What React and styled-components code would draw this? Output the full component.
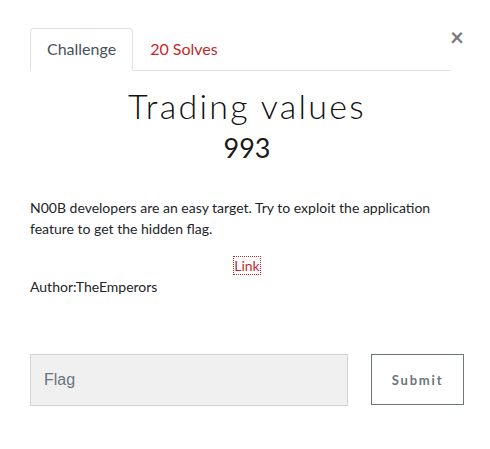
import React from 'react';
import styled, { createGlobalStyle } from 'styled-components';

const Global = createGlobalStyle`
	body {
		margin: 0;
		background: #fff;
		font-family: Lato, "Open Sans", sans-serif;
		color: #212529;
	}
`

export default function App() {
	return (
		<>
			<Global />
			<Modal>
				<Header>
					<Tabs>
						<Tab active>Challenge</Tab>
						<Tab>20 Solves</Tab>
					</Tabs>
					<Close>×</Close>
				</Header>
				<Title>Trading values</Title>
				<Value>993</Value>
				<Description>
					N00B developers are an easy target. Try to exploit the application feature to get the hidden flag.
				</Description>
				<LinkRow><a href="#">Link</a></LinkRow>
				<Author>Author:TheEmperors</Author>
				<SubmitRow>
					<FlagInput placeholder="Flag" />
					<SubmitButton>Submit</SubmitButton>
				</SubmitRow>
			</Modal>
		</>
	);
}

const Modal = styled.div`
	padding: 28px 26px 0 30px;
	width: 434px;
`

const Header = styled.div`
	display: flex;
	align-items: flex-start;
	justify-content: space-between;
`

const Tabs = styled.div`
	display: flex;
	width: 420px;
	border-bottom: 1px solid #dee2e6;
`

const Tab = styled.div`
	padding: 0 16px;
	height: 41px;
	line-height: 40px;
	font-size: 16px;
	margin-bottom: -1px;
	border: 1px solid ${p => p.active ? '#dee2e6' : 'transparent'};
	border-bottom-color: ${p => p.active ? '#fff' : 'transparent'};
	border-radius: 4px 4px 0 0;
	background: ${p => p.active ? '#fff' : 'transparent'};
	color: ${p => p.active ? '#495057' : '#c62828'};
`

const Close = styled.span`
	font-size: 24px;
	font-weight: 700;
	line-height: 20px;
	color: #7a7a7a;
	margin-top: -1px;
`

const Title = styled.h3`
	margin: 15px 0 0;
	text-align: center;
	font-size: 34px;
	font-weight: 300;
	letter-spacing: 2.3px;
	line-height: 40px;
	color: #111;
`

const Value = styled.h4`
	margin: 4px 0 0;
	text-align: center;
	font-size: 27px;
	font-weight: 400;
	line-height: 36px;
	color: #1a1a1a;
`

const Description = styled.p`
	margin: 31px 0 16px;
	font-size: 14px;
	line-height: 21px;
`

const LinkRow = styled.div`
	text-align: center;
	font-size: 14px;
	line-height: 21px;
	height: 21px;
	a {
		color: #c62828;
		text-decoration: none;
		outline: 1px dotted #c62828;
	}
`

const Author = styled.div`
	font-size: 14px;
	line-height: 21px;
`

const SubmitRow = styled.div`
	display: flex;
	align-items: flex-start;
	justify-content: space-between;
	margin-top: 57px;
	width: 434px;
`

const FlagInput = styled.input`
	box-sizing: border-box;
	width: 318px;
	height: 52px;
	padding: 0 13px;
	background: #f0f0f0;
	border: 1px solid #d2d5d8;
	font-family: "Liberation Sans", Arial, sans-serif;
	font-size: 16px;
	&::placeholder { color: #6c757d; }
`

const SubmitButton = styled.button`
	box-sizing: border-box;
	width: 93px;
	height: 51px;
	background: #fff;
	border: 1px solid #6c757d;
	color: #6c757d;
	font-family: Lato, sans-serif;
	font-weight: 700;
	font-size: 13px;
	letter-spacing: 1.8px;
`
